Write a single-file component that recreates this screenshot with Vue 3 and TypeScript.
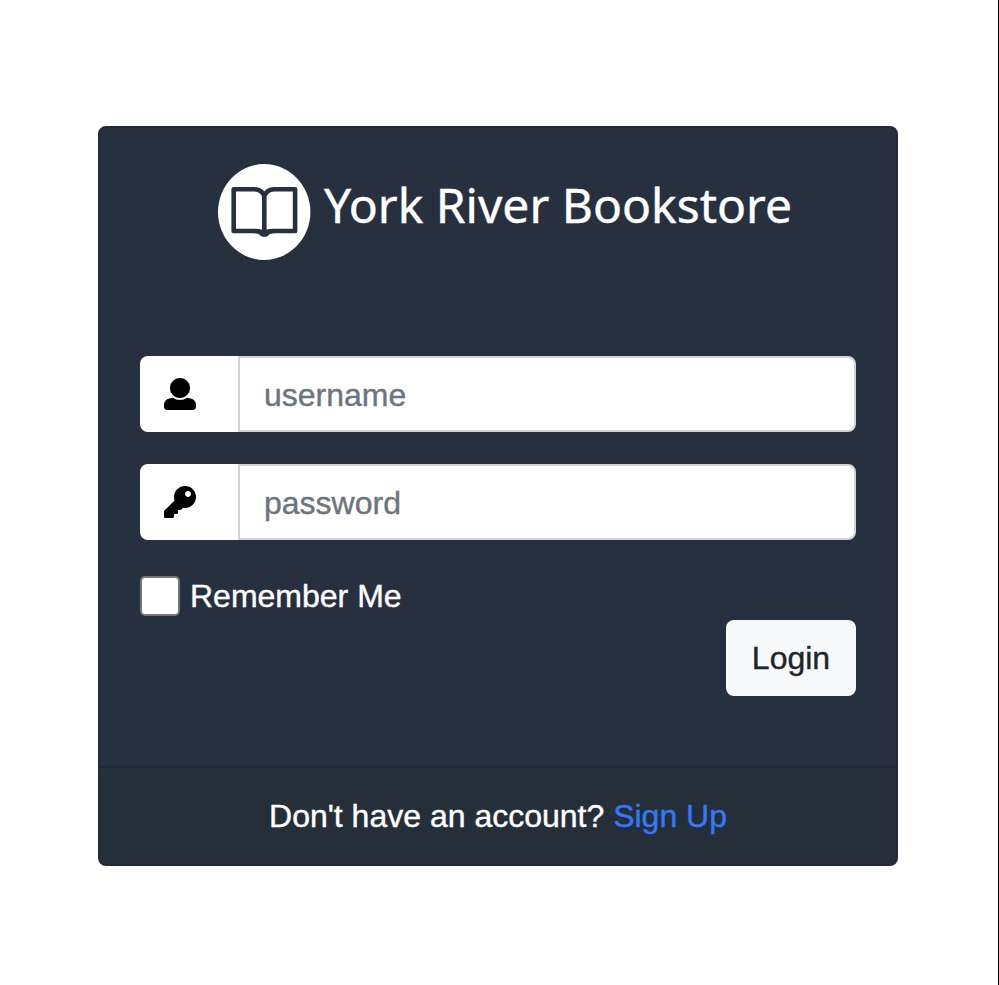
<script setup lang="ts">
import { ref } from 'vue'

const username = ref<string>('')
const password = ref<string>('')
const remember = ref<boolean>(false)
</script>

<template>
  <main class="page">
    <section class="card">
      <header class="brand">
        <svg class="logo" viewBox="0 0 93 96" aria-hidden="true">
          <ellipse cx="46.2" cy="48" rx="46.2" ry="47.9" fill="#fff" />
          <path
            d="M15.7 25.2H36.5C42 25.2 46.3 29 46.3 34V70C46.3 68.3 42 67 37.5 67H15.7ZM77.1 25.2H56.1C50.6 25.2 46.3 29 46.3 34V70C46.3 68.3 50.6 67 55.1 67H77.1Z"
            fill="none" stroke="#27303f" stroke-width="4.6" stroke-linejoin="round"
          />
          <path d="M36 66H57V69.2C53.5 69.2 51.8 69.7 50.7 71C49.6 72.6 48 72.7 46.3 72.7S43 72.6 41.9 71C40.8 69.7 39.4 69.2 36 69.2Z" fill="#27303f" />
        </svg>
        <h1 class="title">York River Bookstore</h1>
      </header>

      <form class="form" @submit.prevent>
        <div class="group">
          <span class="prefix">
            <svg viewBox="0 0 512 512" aria-hidden="true">
              <path d="M256 0c88.366 0 160 71.634 160 160s-71.634 160-160 160S96 248.366 96 160 167.634 0 256 0zm183.283 333.821l-71.313-17.828c-74.923 53.89-165.738 41.864-223.94 0l-71.313 17.828C29.981 344.505 0 382.903 0 426.955V464c0 26.51 21.49 48 48 48h416c26.51 0 48-21.49 48-48v-37.045c0-44.052-29.981-82.45-72.717-93.134z" />
            </svg>
          </span>
          <input v-model="username" class="field" type="text" placeholder="username" />
        </div>
        <div class="group">
          <span class="prefix">
            <svg viewBox="0 0 512 512" aria-hidden="true">
              <path d="M512 176.001C512 273.203 433.202 352 336 352c-11.22 0-22.19-1.062-32.827-3.069l-24.012 27.014A23.999 23.999 0 0 1 261.223 384H224v40c0 13.255-10.745 24-24 24h-40v40c0 13.255-10.745 24-24 24H24c-13.255 0-24-10.745-24-24v-78.059c0-6.365 2.529-12.47 7.029-16.971l161.802-161.802C163.108 213.814 160 195.271 160 176 160 78.798 238.797.001 335.999 0 433.488-.001 512 78.511 512 176.001zM336 128c0 26.51 21.49 48 48 48s48-21.49 48-48-21.49-48-48-48-48 21.49-48 48z" />
            </svg>
          </span>
          <input v-model="password" class="field" type="password" placeholder="password" />
        </div>
        <label class="remember">
          <input v-model="remember" class="check" type="checkbox" />
          <span>Remember Me</span>
        </label>
        <button class="login" type="submit">Login</button>
      </form>

      <footer class="footer">
        <span>Don't have an account?&nbsp;</span><a class="signup" href="#">Sign Up</a>
      </footer>
    </section>
  </main>
</template>

<style>
body {
  margin: 0;
  background: #fff;
}
</style>

<style scoped>
* {
  box-sizing: border-box;
}

.page {
  height: 985px;
  padding: 126px 0 0 98px;
  border-right: 1px solid #000;
  font: 32px/48px "Liberation Sans", Arial, sans-serif;
  color: #fff;
  -webkit-text-stroke: 0.4px currentColor;
}

.card {
  display: flex;
  flex-direction: column;
  width: 800px;
  height: 740px;
  overflow: hidden;
  border: 2px solid #222b39;
  border-radius: 8px;
  background: #27303f;
}

.brand {
  display: flex;
  height: 228px;
  padding: 36px 0 0 118px;
}

.logo {
  flex: none;
  width: 93px;
  height: 96px;
}

.title {
  margin: 8px 0 0 13px;
  font: 400 48px/66px "Noto Sans", "Open Sans", sans-serif;
  white-space: nowrap;
}

.form {
  display: flex;
  flex: 1;
  flex-direction: column;
  padding: 0 40px;
}

.group {
  display: flex;
  height: 76px;
  margin-bottom: 32px;
}

.prefix {
  display: flex;
  align-items: center;
  width: 98px;
  padding-left: 24px;
  border-radius: 8px 0 0 8px;
  background: #fff;
}

.prefix svg {
  width: 32px;
  height: 32px;
  fill: #000;
}

.field {
  flex: 1;
  min-width: 0;
  margin: 0;
  padding: 2px 24px 0;
  border: 2px solid #ced4da;
  border-radius: 0 8px 8px 0;
  outline: none;
  background: #fff;
  color: #495057;
  font: inherit;
}

.field::placeholder {
  color: #6c757d;
  opacity: 1;
}

.remember {
  display: flex;
  align-items: center;
  align-self: flex-start;
  gap: 10px;
  height: 48px;
}

.check {
  appearance: none;
  width: 40px;
  height: 40px;
  margin: 0;
  border: 2px solid #767676;
  border-radius: 5px;
  background: #fff;
}

.check:checked {
  background: #3478f6;
}

.login {
  align-self: flex-end;
  width: 130px;
  height: 76px;
  padding: 0;
  border: 0;
  border-radius: 8px;
  background: #f8f9fb;
  color: #212529;
  font: inherit;
}

.footer {
  display: flex;
  justify-content: center;
  height: 98px;
  padding-top: 24px;
  border-top: 2px solid #212b35;
  background: #252f3a;
}

.signup {
  color: #3478f6;
  text-decoration: none;
}
</style>
